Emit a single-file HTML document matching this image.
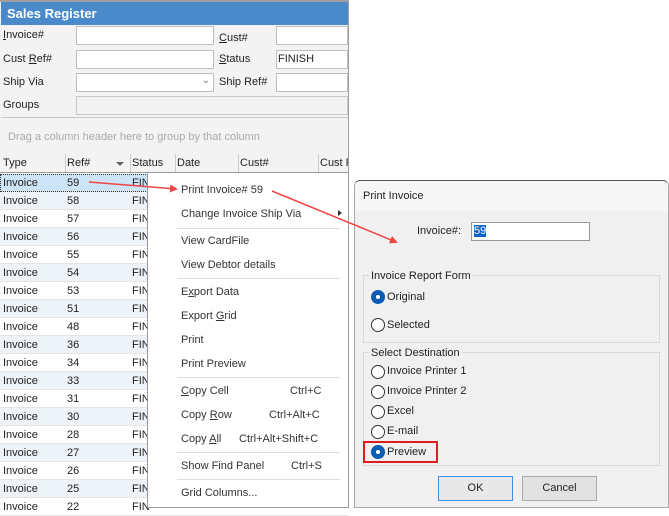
<!DOCTYPE html>
<html><head><style>
*{box-sizing:border-box;margin:0;padding:0}
body{width:669px;height:508px;position:relative;background:#fff;font-family:"Liberation Sans",sans-serif;font-size:11px;color:#222;overflow:hidden}
.a{position:absolute}
.in{position:absolute;background:#fff;border:1px solid #bdbdbd;height:19px}
.lbl{position:absolute;font-size:11px}
.row{position:absolute;left:0;width:348px;height:18px;font-size:11px}
.row span{position:absolute;top:3px}
.mi{position:absolute;left:181px;font-size:11px;color:#333}
.sep{position:absolute;left:177px;width:163px;height:1px;background:#ddd}
.rb{position:absolute;width:14px;height:14px;border-radius:50%;border:1px solid #333;background:#fff}
.rb.on{background:#0a5cb5;border-color:#0a5cb5}
.rb.on:after{content:"";position:absolute;left:4px;top:4px;width:4px;height:4px;border-radius:50%;background:#fff}
.rt{position:absolute;font-size:11px}
</style></head><body>
<div class="a" style="left:0;top:0;width:349px;height:508px;background:#f3f3f3;border-right:1px solid #a0a0a0;border-top:2px solid #a0a0a0"></div>
<div class="a" style="left:1px;top:2px;width:347px;height:23px;background:#4a8acb;color:#fff;font-weight:bold;font-size:13px;padding:4px 6px">Sales Register</div>
<div class="lbl" style="left:3px;top:29px"><u>I</u>nvoice#</div>
<div class="in" style="left:76px;top:26px;width:138px"></div>
<div class="lbl" style="left:219px;top:32px"><u>C</u>ust#</div>
<div class="in" style="left:276px;top:26px;width:72px"></div>
<div class="lbl" style="left:3px;top:53px">Cust <u>R</u>ef#</div>
<div class="in" style="left:76px;top:50px;width:138px"></div>
<div class="lbl" style="left:219px;top:53px"><u>S</u>tatus</div>
<div class="in" style="left:276px;top:50px;width:72px;padding:2px 1px">FINISH</div>
<div class="lbl" style="left:3px;top:76px">Ship Via</div>
<div class="in" style="left:76px;top:73px;width:138px"><span style="position:absolute;right:3px;top:1px;color:#777;font-size:10px">&#8964;</span></div>
<div class="lbl" style="left:219px;top:76px">Ship Ref#</div>
<div class="in" style="left:276px;top:73px;width:72px"></div>
<div class="lbl" style="left:3px;top:99px">Groups</div>
<div class="a" style="left:76px;top:96px;width:272px;height:19px;background:#f3f3f3;border:1px solid #c8c8c8"></div>
<div class="a" style="left:1px;top:117px;width:347px;height:1px;background:#c8c8c8"></div>
<div class="lbl" style="left:8px;top:131px;color:#aaa">Drag a column header here to group by that column</div>
<div class="a" style="left:0;top:154px;width:348px;height:19px;border-bottom:1px solid #999"></div>
<div class="lbl" style="left:3px;top:157px">Type</div>
<div class="a" style="left:65px;top:154px;width:1px;height:18px;background:#ccc"></div>
<div class="lbl" style="left:67px;top:157px">Ref#</div>
<div class="a" style="left:116px;top:162px;border:4px solid transparent;border-top:4px solid #666"></div>
<div class="a" style="left:130px;top:154px;width:1px;height:18px;background:#ccc"></div>
<div class="lbl" style="left:132px;top:157px">Status</div>
<div class="a" style="left:175px;top:154px;width:1px;height:18px;background:#ccc"></div>
<div class="lbl" style="left:177px;top:157px">Date</div>
<div class="a" style="left:238px;top:154px;width:1px;height:18px;background:#ccc"></div>
<div class="lbl" style="left:240px;top:157px">Cust#</div>
<div class="a" style="left:318px;top:154px;width:1px;height:18px;background:#ccc"></div>
<div class="lbl" style="left:320px;top:157px;width:28px;overflow:hidden;white-space:nowrap">Cust Ref</div>
<div class="a" style="left:0;top:173px;width:348px;height:335px;background:#fff"></div>
<div id="rows"></div>
<script>
var n=[59,58,57,56,55,54,53,51,48,36,34,33,31,30,28,27,26,25,22],h='';
for(var i=0;i<n.length;i++){var t=174+i*18;var bg=i==0?'#cde4f7':(i%2?'#eef2f9':'#fff');
h+='<div class="row" style="top:'+t+'px;background:'+bg+';border-bottom:1px solid #e4e4e4'+(i==0?';outline:1px dotted #333;outline-offset:-1px':'')+'"><span style="left:3px">Invoice</span><span style="left:67px">'+n[i]+'</span><span style="left:132px">FIN</span></div>';}
document.getElementById('rows').innerHTML=h;
</script>
<div class="a" style="left:147px;top:172px;width:202px;height:336px;background:#fff;border:1px solid #999"></div>
<div class="mi" style="top:184px">Print Invoice# 59</div>
<div class="mi" style="top:208px">Change Invoice Ship Via</div>
<div class="a" style="left:338px;top:210px;border:3px solid transparent;border-left:4px solid #333"></div>
<div class="sep" style="top:228px"></div>
<div class="mi" style="top:235px">View CardFile</div>
<div class="mi" style="top:259px">View Debtor details</div>
<div class="sep" style="top:278px"></div>
<div class="mi" style="top:286px">E<u>x</u>port Data</div>
<div class="mi" style="top:310px">Export <u>G</u>rid</div>
<div class="mi" style="top:334px">Print</div>
<div class="mi" style="top:358px">Print Preview</div>
<div class="sep" style="top:377px"></div>
<div class="mi" style="top:385px"><u>C</u>opy Cell</div><div class="mi" style="left:290px;top:385px">Ctrl+C</div>
<div class="mi" style="top:409px">Copy <u>R</u>ow</div><div class="mi" style="left:269px;top:409px">Ctrl+Alt+C</div>
<div class="mi" style="top:433px">Copy <u>A</u>ll</div><div class="mi" style="left:239px;top:433px">Ctrl+Alt+Shift+C</div>
<div class="sep" style="top:452px"></div>
<div class="mi" style="top:460px">Show Find Panel</div><div class="mi" style="left:291px;top:460px">Ctrl+S</div>
<div class="sep" style="top:479px"></div>
<div class="mi" style="top:487px">Grid Columns...</div>
<div class="a" style="left:354px;top:180px;width:315px;height:328px;background:#f0f0f0;border:1px solid #aaa;border-top:1px solid #555;border-radius:6px 6px 0 0;overflow:hidden"><div style="height:30px;background:#f7f7f7"></div></div>
<div class="a" style="left:363px;top:190px;font-size:11px">Print Invoice</div>
<div class="a" style="left:417px;top:225px">Invoice#:</div>
<div class="a" style="left:471px;top:222px;width:119px;height:19px;background:#fff;border:1px solid #999;padding:2px 2px"><span style="background:#0a64c8;color:#fff">59</span></div>
<div class="a" style="left:363px;top:275px;width:297px;height:68px;border:1px solid #d8d8d8"></div>
<div class="a" style="left:369px;top:270px;background:#f0f0f0;padding:0 2px">Invoice Report Form</div>
<div class="rb on" style="left:371px;top:290px"></div><div class="rt" style="left:387px;top:291px">Original</div>
<div class="rb" style="left:371px;top:318px"></div><div class="rt" style="left:387px;top:319px">Selected</div>
<div class="a" style="left:363px;top:352px;width:297px;height:114px;border:1px solid #d8d8d8"></div>
<div class="a" style="left:369px;top:347px;background:#f0f0f0;padding:0 2px">Select Destination</div>
<div class="rb" style="left:371px;top:365px"></div><div class="rt" style="left:387px;top:365px">Invoice Printer 1</div>
<div class="rb" style="left:371px;top:385px"></div><div class="rt" style="left:387px;top:385px">Invoice Printer 2</div>
<div class="rb" style="left:371px;top:405px"></div><div class="rt" style="left:387px;top:405px">Excel</div>
<div class="rb" style="left:371px;top:425px"></div><div class="rt" style="left:387px;top:425px">E-mail</div>
<div class="rb on" style="left:371px;top:445px"></div><div class="rt" style="left:387px;top:446px">Preview</div>
<div class="a" style="left:363px;top:441px;width:75px;height:22px;border:2px solid #d81e1e"></div>
<div class="a" style="left:438px;top:476px;width:75px;height:25px;border:1px solid #3c8ee6;background:#e8e8e8;text-align:center;padding-top:5px">OK</div>
<div class="a" style="left:522px;top:476px;width:75px;height:25px;border:1px solid #aaa;background:#e2e2e2;text-align:center;padding-top:5px">Cancel</div>
<svg class="a" style="left:0;top:0" width="669" height="508">
<defs><marker id="m" markerWidth="8" markerHeight="8" refX="6" refY="4" orient="auto" markerUnits="userSpaceOnUse"><path d="M0,0 L8,4 L0,8 z" fill="#f04545"/></marker></defs>
<line x1="89" y1="182" x2="176" y2="189" stroke="#f04545" stroke-width="1.5" marker-end="url(#m)"/>
<line x1="272" y1="191" x2="396" y2="242" stroke="#f04545" stroke-width="1.5" marker-end="url(#m)"/>
</svg>
</body></html>
